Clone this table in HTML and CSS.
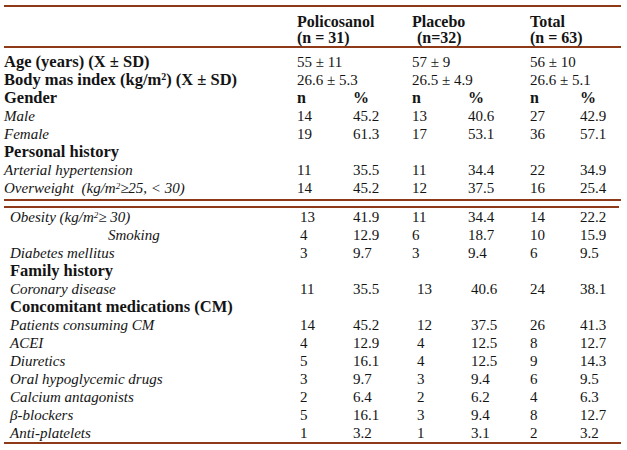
FILE: index.html
```html
<!DOCTYPE html>
<html>
<head>
<meta charset="utf-8">
<link rel="stylesheet" href="styles.css">
</head>
<body>
<table class="t">
  <colgroup>
    <col class="c-lab"><col class="c-n1"><col class="c-p1"><col class="c-n2"><col class="c-p2"><col class="c-n3"><col class="c-p3">
  </colgroup>
  <thead>
    <tr class="head">
      <th></th>
      <th colspan="2">Policosanol<br>(n = 31)</th>
      <th colspan="2">Placebo<br><span class="ind">(n=32)</span></th>
      <th colspan="2">Total<br>(n = 63)</th>
    </tr>
  </thead>
  <tbody>
    <tr class="r first"><td class="lab b">Age (years) (X ± SD)</td><td colspan="2">55 ± 11</td><td colspan="2">57 ± 9</td><td colspan="2">56 ± 10</td></tr>
    <tr class="r"><td class="lab b">Body mas index (kg/m<sup class="sq">2</sup>) (X ± SD)</td><td colspan="2">26.6 ± 5.3</td><td colspan="2">26.5 ± 4.9</td><td colspan="2">26.6 ± 5.1</td></tr>
    <tr class="r"><td class="lab b">Gender</td><td class="b">n</td><td class="b">%</td><td class="b">n</td><td class="b">%</td><td class="b">n</td><td class="b">%</td></tr>
    <tr class="r"><td class="lab i">Male</td><td>14</td><td>45.2</td><td>13</td><td>40.6</td><td>27</td><td>42.9</td></tr>
    <tr class="r"><td class="lab i">Female</td><td>19</td><td>61.3</td><td>17</td><td>53.1</td><td>36</td><td>57.1</td></tr>
    <tr class="r"><td class="lab b">Personal history</td><td></td><td></td><td></td><td></td><td></td><td></td></tr>
    <tr class="r"><td class="lab i">Arterial hypertension</td><td>11</td><td>35.5</td><td>11</td><td>34.4</td><td>22</td><td>34.9</td></tr>
    <tr class="r"><td class="lab i">Overweight&nbsp; (kg/m<sup class="sq">2</sup>≥25, &lt; 30)</td><td>14</td><td>45.2</td><td>12</td><td>37.5</td><td>16</td><td>25.4</td></tr>
    <tr class="sep"><td colspan="7"><div class="l1"></div><div class="l2"></div></td></tr>
    <tr class="r lo"><td class="lab i">Obesity (kg/m<sup class="sq">2</sup>≥ 30)</td><td>13</td><td>41.9</td><td>11</td><td>34.4</td><td>14</td><td>22.2</td></tr>
    <tr class="r lo"><td class="lab i smk">Smoking</td><td>4</td><td>12.9</td><td>6</td><td>18.7</td><td>10</td><td>15.9</td></tr>
    <tr class="r lo"><td class="lab i">Diabetes mellitus</td><td>3</td><td>9.7</td><td>3</td><td>9.4</td><td>6</td><td>9.5</td></tr>
    <tr class="r lo"><td class="lab b">Family history</td><td></td><td></td><td></td><td></td><td></td><td></td></tr>
    <tr class="r lo sh"><td class="lab i">Coronary disease</td><td>11</td><td>35.5</td><td>13</td><td>40.6</td><td>24</td><td>38.1</td></tr>
    <tr class="r lo"><td class="lab b">Concomitant medications (CM)</td><td></td><td></td><td></td><td></td><td></td><td></td></tr>
    <tr class="r lo sh"><td class="lab i">Patients consuming CM</td><td>14</td><td>45.2</td><td>12</td><td>37.5</td><td>26</td><td>41.3</td></tr>
    <tr class="r lo sh"><td class="lab i">ACEI</td><td>4</td><td>12.9</td><td>4</td><td>12.5</td><td>8</td><td>12.7</td></tr>
    <tr class="r lo sh"><td class="lab i">Diuretics</td><td>5</td><td>16.1</td><td>4</td><td>12.5</td><td>9</td><td>14.3</td></tr>
    <tr class="r lo sh"><td class="lab i">Oral hypoglycemic drugs</td><td>3</td><td>9.7</td><td>3</td><td>9.4</td><td>6</td><td>9.5</td></tr>
    <tr class="r lo sh"><td class="lab i">Calcium antagonists</td><td>2</td><td>6.4</td><td>2</td><td>6.2</td><td>4</td><td>6.3</td></tr>
    <tr class="r lo sh"><td class="lab i">β-blockers</td><td>5</td><td>16.1</td><td>3</td><td>9.4</td><td>8</td><td>12.7</td></tr>
    <tr class="r lo sh last"><td class="lab i">Anti-platelets</td><td>1</td><td>3.2</td><td>1</td><td>3.1</td><td>2</td><td>3.2</td></tr>
  </tbody>
</table>
</body>
</html>
```
FILE: styles.css
```css
html, body {
  margin: 0;
  padding: 0;
  background: #ffffff;
}
body {
  font-family: "Liberation Serif", "Times New Roman", serif;
  color: #141414;
}
.t {
  margin: 5px 0 0 4px;
  width: 617px;
  table-layout: fixed;
  border-collapse: separate;
  border-spacing: 0;
  font-size: 15px;
}
.c-lab { width: 293px; }
.c-n1 { width: 56px; }
.c-p1 { width: 59px; }
.c-n2 { width: 56px; }
.c-p2 { width: 62px; }
.c-n3 { width: 50px; }
.c-p3 { width: 41px; }
.t th, .t td {
  padding: 0;
  text-align: left;
  white-space: nowrap;
  vertical-align: middle;
}
.head th {
  border-top: 2px solid #8e3a18;
  border-bottom: 2px solid #8e3a18;
  padding-top: 7px;
  line-height: 16px;
  font-size: 16px;
  font-weight: bold;
  vertical-align: top;
}
.ind { padding-left: 5px; }
.r td { line-height: 18px; }
.first td { padding-top: 5px; }
.lab { padding-left: 2px; }
.lo .lab { padding-left: 6px; }
.lo .lab.smk { padding-left: 104px; }
.b { font-weight: bold; font-size: 16px; }
.lab.b { font-size: 16.5px; }
.i { font-style: italic; }
.sq {
  font-size: 0.6em;
  vertical-align: 0.5em;
  line-height: 0;
}
.lo td:nth-child(2) { padding-left: 3px; }
.sh td:nth-child(4) { padding-left: 5px; }
.sh td:nth-child(5) { padding-left: 3px; }
.sep td {
  font-size: 0;
  line-height: 0;
}
.l1 {
  margin-top: 2px;
  border-top: 2px solid #8e3a18;
}
.l2 {
  margin-top: 5px;
  margin-right: 2px;
  border-top: 2px solid #8e3a18;
}
.last td { border-bottom: 2px solid #8e3a18; }
.last td:last-child { padding-right: 2px; }
```
